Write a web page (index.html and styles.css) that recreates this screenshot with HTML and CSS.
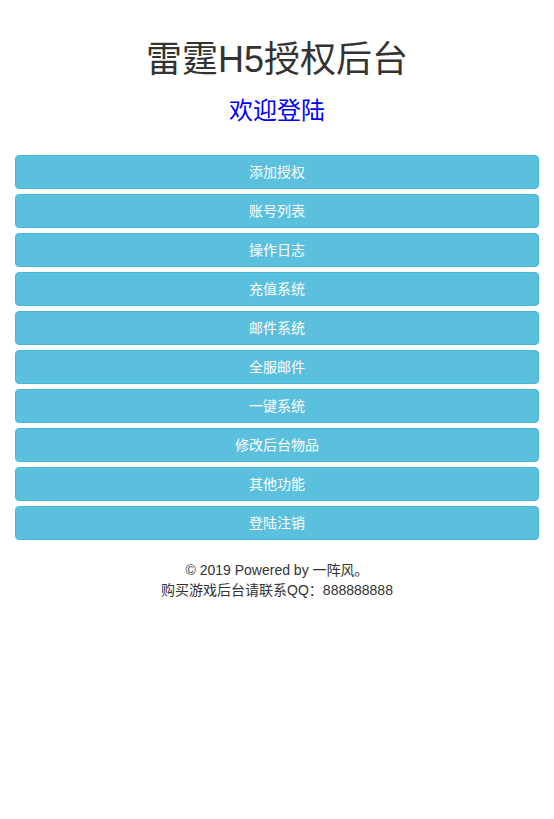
FILE: index.html
```html
<!DOCTYPE html>
<html lang="zh-CN">
<head>
<meta charset="utf-8">
<title>雷霆H5授权后台</title>
<link rel="stylesheet" href="styles.css">
</head>
<body>
<div class="container">
  <header class="head">
    <h1 class="title">雷霆H5授权后台</h1>
    <h3 class="welcome">欢迎登陆</h3>
  </header>
  <nav class="menu">
    <a class="btn" href="#">添加授权</a>
    <a class="btn" href="#">账号列表</a>
    <a class="btn" href="#">操作日志</a>
    <a class="btn" href="#">充值系统</a>
    <a class="btn" href="#">邮件系统</a>
    <a class="btn" href="#">全服邮件</a>
    <a class="btn" href="#">一键系统</a>
    <a class="btn" href="#">修改后台物品</a>
    <a class="btn" href="#">其他功能</a>
    <a class="btn" href="#">登陆注销</a>
  </nav>
  <footer class="foot">
    <p>© 2019 Powered by 一阵风。</p>
    <p>购买游戏后台请联系QQ：888888888</p>
  </footer>
</div>
</body>
</html>
```
FILE: styles.css
```css
html, body {
  margin: 0;
  padding: 0;
  background: #fff;
}
body {
  font-family: "Liberation Sans", Arial, "Noto Sans CJK SC", sans-serif;
  font-size: 14px;
  line-height: 20px;
  color: #333;
}
.container {
  padding: 40px 15px 0;
}
.head {
  text-align: center;
}
.title {
  margin: 0;
  font-size: 36px;
  line-height: 40px;
  font-weight: normal;
  color: #333;
}
.welcome {
  margin: 18px 0 0;
  font-size: 24px;
  line-height: 26px;
  font-weight: normal;
  color: #0000ff;
}
.menu {
  margin-top: 31px;
  display: flex;
  flex-direction: column;
  gap: 5px;
}
.btn {
  display: block;
  padding: 6px 12px;
  border: 1px solid #46b8da;
  border-radius: 4px;
  background: #5bc0de;
  color: #fff;
  text-align: center;
  text-decoration: none;
  font-size: 14px;
  line-height: 20px;
}
.foot {
  margin-top: 20px;
  text-align: center;
}
.foot p {
  margin: 0;
}
```
